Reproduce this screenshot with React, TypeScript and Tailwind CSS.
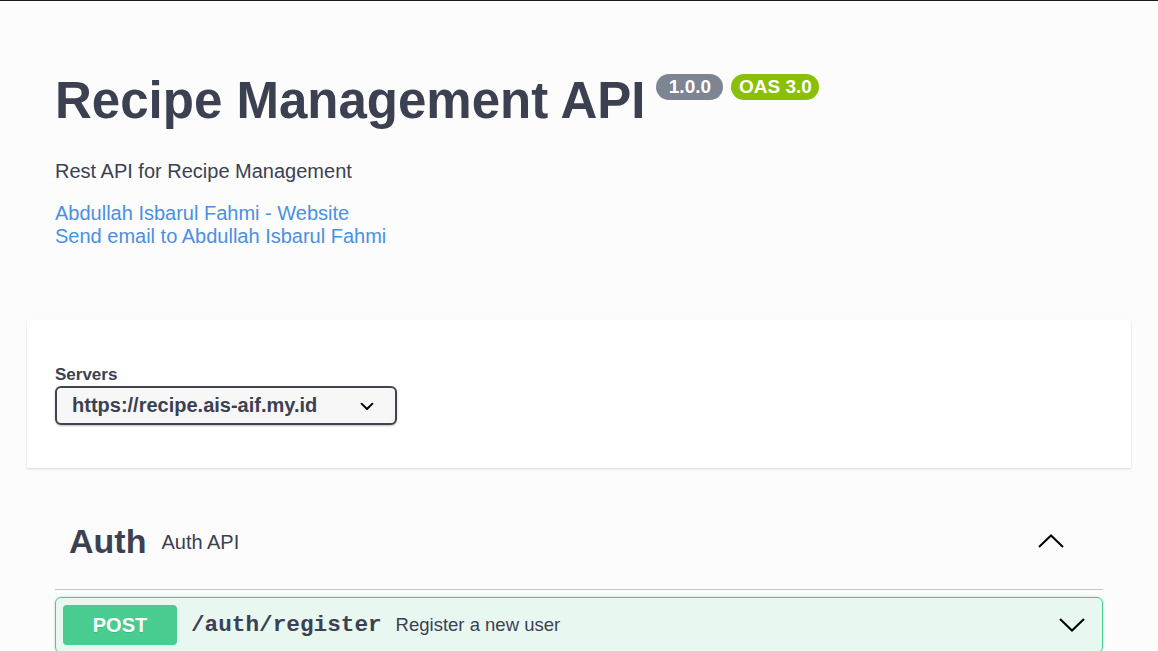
import React from 'react';

const Badge: React.FC<{ label: string; className: string }> = ({ label, className }) => (
  <span
    className={`flex h-[26px] items-center justify-center rounded-full text-[19px] font-bold leading-[26px] text-white ${className}`}
  >
    {label}
  </span>
);

const App: React.FC = () => {
  return (
    <div className="min-h-screen bg-[#fcfcfc] font-['Liberation_Sans',Arial,sans-serif] text-[#3b4151]">
      <div className="h-px bg-[#1b1b1b]" />
      <div className="px-[27px]">
        {/* info */}
        <div className="px-[28px] pt-[74px]">
          <div className="flex items-start">
            <h2 className="text-[51px] font-bold leading-[51px]">Recipe Management API</h2>
            <div className="ml-[11px] mt-[-1px] flex gap-[8px]">
              <Badge label="1.0.0" className="w-[67px] bg-[#7d8492]" />
              <Badge label="OAS 3.0" className="w-[88px] bg-[#89bf04]" />
            </div>
          </div>
          <p className="mt-[34px] text-[20px] leading-[23px]">Rest API for Recipe Management</p>
          <div className="mt-[19px] flex flex-col text-[20px] leading-[23px] text-[#4990e2]">
            <a href="#">Abdullah Isbarul Fahmi - Website</a>
            <a href="#">Send email to Abdullah Isbarul Fahmi</a>
          </div>
        </div>

        {/* servers */}
        <div className="mt-[72px] bg-white px-[28px] py-[43px] shadow-[0_1px_2px_0_rgba(0,0,0,0.15)]">
          <div className="pt-[2px] text-[17px] font-bold leading-[20px]">Servers</div>
          <div className="mt-[1px] flex h-[39px] w-[342px] items-center rounded-[6px] border-2 border-[#41444e] bg-[#f7f7f7] pl-[15px] pr-[14px] shadow-[0_1px_2px_0_rgba(0,0,0,0.25)]">
            <span className="text-[20px] font-bold leading-[23px]">https://recipe.ais-aif.my.id</span>
            <svg className="ml-auto h-[28px] w-[28px]" viewBox="0 0 20 20" fill="#000">
              <path d="M13.418 7.859a.695.695 0 01.978 0 .68.68 0 010 .969l-3.908 3.83a.697.697 0 01-.979 0l-3.908-3.83a.68.68 0 010-.969.695.695 0 01.978 0L10 11l3.418-3.141z" />
            </svg>
          </div>
        </div>

        {/* tag */}
        <div className="px-[28px]">
          <div className="mt-[25px] flex h-[97px] items-center border-b border-[#3b4151]/30 pl-[14px] pr-[39px]">
            <div className="flex items-center">
              <h3 className="text-[34px] font-bold leading-[40px]">Auth</h3>
              <span className="ml-[15px] mt-[3px] text-[20px] leading-[23px]">Auth API</span>
            </div>
            <svg className="ml-auto h-[14px] w-[26px]" viewBox="0 0 26 14" fill="none" stroke="#000" strokeWidth="2">
              <polyline points="1,13 13,1.5 25,13" />
            </svg>
          </div>

          <div className="mt-[7px] rounded-[6px] border border-[#49cc90] bg-[#49cc90]/10 shadow-[0_0_3px_rgba(0,0,0,0.19)]">
            <div className="flex items-center p-[7px]">
              <span className="flex h-[40px] w-[114px] items-center justify-center rounded-[4px] bg-[#49cc90] text-[20px] font-bold text-white [text-shadow:0_1px_0_rgba(0,0,0,0.1)]">
                POST
              </span>
              <span className="ml-[14px] font-['Liberation_Mono','Courier_New',monospace] text-[22.7px] font-bold">
                /auth/register
              </span>
              <span className="ml-[14px] text-[18.5px]">Register a new user</span>
              <svg className="ml-auto mr-[10px] h-[14px] w-[26px]" viewBox="0 0 26 14" fill="none" stroke="#000" strokeWidth="2">
                <polyline points="1,1 13,12.5 25,1" />
              </svg>
            </div>
          </div>
        </div>
      </div>
    </div>
  );
};

export default App;
